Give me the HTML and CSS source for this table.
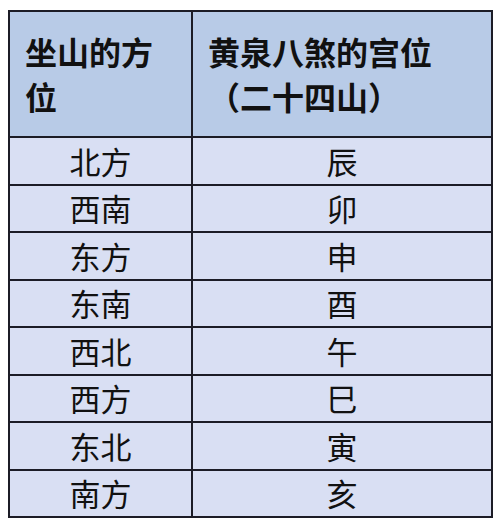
FILE: index.html
```html
<!DOCTYPE html>
<html lang="zh">
<head>
<meta charset="utf-8">
<link rel="stylesheet" href="styles.css">
</head>
<body>
<table class="grid">
  <colgroup><col class="c1"><col class="c2"></colgroup>
  <thead>
    <tr class="head">
      <th>坐山的方<br>位</th>
      <th>黄泉八煞的宫位<br>（二十四山）</th>
    </tr>
  </thead>
  <tbody>
    <tr><td>北方</td><td>辰</td></tr>
    <tr><td>西南</td><td>卯</td></tr>
    <tr><td>东方</td><td>申</td></tr>
    <tr><td>东南</td><td>酉</td></tr>
    <tr><td>西北</td><td>午</td></tr>
    <tr><td>西方</td><td>巳</td></tr>
    <tr><td>东北</td><td>寅</td></tr>
    <tr><td>南方</td><td>亥</td></tr>
  </tbody>
</table>
</body>
</html>
```
FILE: styles.css
```css
html, body {
  margin: 0;
  padding: 0;
  background: #ffffff;
}
body {
  padding: 10px 0 0 8px;
  font-family: "Noto Sans CJK SC", "Noto Sans", sans-serif;
  color: #111111;
}
.grid {
  border-collapse: collapse;
  table-layout: fixed;
  width: 483px;
}
.c1 { width: 183px; }
.c2 { width: 300px; }
.grid th, .grid td {
  border: 2px solid #1c1c26;
  padding: 0;
}
.head th {
  background: #b8cbe7;
  height: 124px;
  font-size: 32px;
  font-weight: bold;
  line-height: 45px;
  text-align: left;
  padding-left: 15px;
  vertical-align: middle;
}
.grid td {
  background: #d9dff3;
  height: 45.5px;
  font-size: 31px;
  line-height: 40px;
  text-align: center;
  vertical-align: middle;
}
```
